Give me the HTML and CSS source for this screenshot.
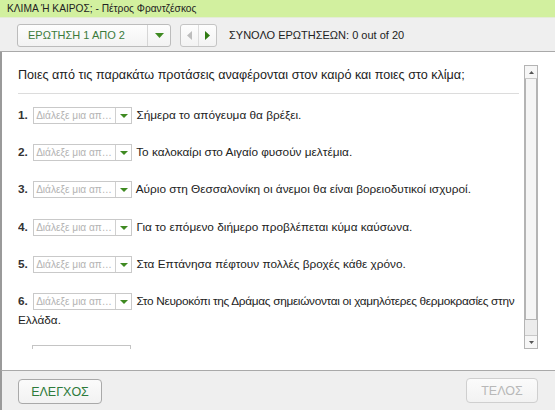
FILE: index.html
```html
<!DOCTYPE html>
<html lang="el">
<head>
<meta charset="utf-8">
<title>ΚΛΙΜΑ Ή ΚΑΙΡΟΣ;</title>
<link rel="stylesheet" href="styles.css">
</head>
<body>
<div class="app">
  <header class="titlebar">ΚΛΙΜΑ Ή ΚΑΙΡΟΣ; - Πέτρος Φραντζέσκος</header>
  <nav class="toolbar">
    <div class="qselect">
      <span class="qselect-label">ΕΡΩΤΗΣΗ 1 ΑΠΟ 2</span>
      <span class="qselect-arrow"><svg width="9" height="5" viewBox="0 0 9 5"><path d="M0 0H9L4.5 5Z" fill="#3f8a22"/></svg></span>
    </div>
    <div class="navbox">
      <span class="navbtn"><svg width="5" height="9" viewBox="0 0 5 9"><path d="M5 0V9L0 4.5Z" fill="#bdbdbd"/></svg></span>
      <span class="navbtn"><svg width="5" height="9" viewBox="0 0 5 9"><path d="M0 0V9L5 4.5Z" fill="#2f7a12"/></svg></span>
    </div>
    <span class="total">ΣΥΝΟΛΟ ΕΡΩΤΗΣΕΩΝ: 0 out of 20</span>
  </nav>
  <main class="content">
    <div class="scrollarea">
      <div class="questions">
        <p class="prompt">Ποιες από τις παρακάτω προτάσεις αναφέρονται στον καιρό και ποιες στο κλίμα;</p>
        <hr class="sep">
        <p class="item"><b>1.</b> <span class="pick"><span class="pick-text">Διάλεξε μια απ…</span><span class="pick-arrow"></span></span> Σήμερα το απόγευμα θα βρέξει.</p>
        <p class="item"><b>2.</b> <span class="pick"><span class="pick-text">Διάλεξε μια απ…</span><span class="pick-arrow"></span></span> Το καλοκαίρι στο Αιγαίο φυσούν μελτέμια.</p>
        <p class="item"><b>3.</b> <span class="pick"><span class="pick-text">Διάλεξε μια απ…</span><span class="pick-arrow"></span></span> Αύριο στη Θεσσαλονίκη οι άνεμοι θα είναι βορειοδυτικοί ισχυροί.</p>
        <p class="item"><b>4.</b> <span class="pick"><span class="pick-text">Διάλεξε μια απ…</span><span class="pick-arrow"></span></span> Για το επόμενο διήμερο προβλέπεται κύμα καύσωνα.</p>
        <p class="item"><b>5.</b> <span class="pick"><span class="pick-text">Διάλεξε μια απ…</span><span class="pick-arrow"></span></span> Στα Επτάνησα πέφτουν πολλές βροχές κάθε χρόνο.</p>
        <p class="item item-long"><b>6.</b> <span class="pick"><span class="pick-text">Διάλεξε μια απ…</span><span class="pick-arrow"></span></span> <span class="tight">Στο Νευροκόπι της Δράμας σημειώνονται οι χαμηλότερες θερμοκρασίες στην</span> Ελλάδα.</p>
        <p class="item item-last"><span class="pick pick-blank"></span></p>
      </div>
      <div class="scrollbar">
        <span class="sb-btn"><svg width="5" height="3" viewBox="0 0 5 3"><path d="M0 3H5L2.5 0Z" fill="#555"/></svg></span>
        <span class="sb-track"><span class="sb-thumb"></span></span>
        <span class="sb-btn"><svg width="5" height="3" viewBox="0 0 5 3"><path d="M0 0H5L2.5 3Z" fill="#555"/></svg></span>
      </div>
    </div>
  </main>
  <footer class="footer">
    <button class="btn btn-check">ΕΛΕΓΧΟΣ</button>
    <button class="btn btn-end" disabled>ΤΕΛΟΣ</button>
  </footer>
</div>
</body>
</html>
```

FILE: styles.css
```css
* { box-sizing: border-box; }
html, body { margin: 0; padding: 0; }
body {
  font-family: "Liberation Sans", Arial, sans-serif;
  color: #222;
  background: #fff;
}
.app {
  width: 555px;
  height: 410px;
  display: flex;
  flex-direction: column;
  overflow: hidden;
}
.titlebar {
  height: 17px;
  line-height: 17px;
  padding-left: 7px;
  font-size: 10.2px;
  color: #222;
  background: #d2f09f;
  flex: none;
}
.toolbar {
  height: 35px;
  flex: none;
  display: flex;
  align-items: center;
  padding: 1px 0 0 17px;
  background: #efefef;
  border-top: 1px solid #e4ecd6;
  border-bottom: 1px solid #a9a9a9;
}
.qselect {
  width: 154px;
  height: 23px;
  display: flex;
  align-items: stretch;
  border: 1px solid #bcbcbc;
  border-radius: 3px;
  background: linear-gradient(#fdfdfd, #f3f3f3);
}
.qselect-label {
  flex: 1;
  font-size: 11px;
  line-height: 21px;
  padding-left: 10px;
  color: #3b7a3b;
}
.qselect-arrow {
  width: 23px;
  border-left: 1px solid #d6d6d6;
  display: flex;
  align-items: center;
  justify-content: center;
  padding-top: 1px;
}
.navbox {
  margin-left: 9px;
  width: 37px;
  height: 23px;
  display: flex;
  border: 1px solid #c4c4c4;
  border-radius: 3px;
  background: linear-gradient(#fdfdfd, #f3f3f3);
}
.navbtn {
  flex: 1;
  display: flex;
  align-items: center;
  justify-content: center;
}
.navbtn + .navbtn { border-left: 1px solid #dcdcdc; }
.total {
  margin-left: 12px;
  font-size: 11px;
  color: #222;
}
.content {
  flex: 1;
  background: #fff;
  border-left: 2px solid #9a9a9a;
  padding: 13px 17px 0 16px;
  min-height: 0;
}
.scrollarea {
  height: 284px;
  display: flex;
  gap: 2px;
}
.questions {
  flex: 1;
  overflow: hidden;
  font-size: 11.8px;
  color: #222;
}
.prompt {
  margin: 2px 0 0;
  line-height: 16px;
  font-size: 12.6px;
}
.sep {
  margin: 10px 3px 0 0;
  border: 0;
  border-top: 1px solid #dcdcdc;
  height: 0;
}
.item {
  margin: 0 0 18.2px;
  line-height: 19px;
}
.item-long { margin-bottom: 15px; }
.tight { letter-spacing: -0.3px; }
.sep + .item { margin-top: 12px; }
.item b { font-weight: bold; color: #333; margin-right: 2px; }
.pick {
  display: inline-flex;
  vertical-align: baseline;
  width: 99px;
  height: 17px;
  border: 1px solid #c9c9c9;
  background: #fff;
  margin: 0 1px 0 0;
}
.pick-blank {
  margin-left: 14px;
  border-color: #c4c4c4;
}
.pick-text {
  flex: 1;
  min-width: 0;
  white-space: nowrap;
  overflow: hidden;
  font-size: 10.1px;
  line-height: 15px;
  padding-left: 2px;
  color: #b3b3b3;
}
.pick-arrow {
  width: 16px;
  flex: none;
  border-left: 1px solid #d0d0d0;
  position: relative;
}
.pick-arrow::after {
  content: "";
  position: absolute;
  left: 4px;
  top: 6px;
  border-left: 4px solid transparent;
  border-right: 4px solid transparent;
  border-top: 4px solid #3f8a22;
}
.scrollbar {
  width: 14px;
  flex: none;
  display: flex;
  flex-direction: column;
  border: 1px solid #b4b4b4;
  background: #ececec;
}
.sb-btn {
  height: 12px;
  flex: none;
  display: flex;
  align-items: center;
  justify-content: center;
  background: #f6f6f6;
}
.sb-track {
  flex: 1;
  display: flex;
  flex-direction: column;
  border-top: 1px solid #c8c8c8;
  border-bottom: 1px solid #c8c8c8;
  background: #ececec;
  padding-bottom: 15px;
}
.sb-thumb {
  flex: 1;
  border: 1px solid #b4b4b4;
  border-top: 0;
  background: #f5f5f5;
}
.footer {
  height: 40px;
  flex: none;
  display: flex;
  justify-content: space-between;
  align-items: flex-start;
  padding: 8px 17px 0 16px;
  background: #efefef;
  border-top: 1px solid #a9a9a9;
  border-left: 2px solid #9a9a9a;
}
.btn {
  height: 25px;
  font-family: "Liberation Sans", Arial, sans-serif;
  font-size: 12.5px;
  border-radius: 4px;
  padding: 0;
  background: linear-gradient(#fbfbfb, #f2f2f2);
}
.btn-check {
  width: 84px;
  color: #2d7a3a;
  border: 1px solid #a9a9a9;
}
.btn-end {
  width: 72px;
  color: #b8b8b8;
  border: 1px solid #cfcfcf;
  margin-top: -1px;
}
```
